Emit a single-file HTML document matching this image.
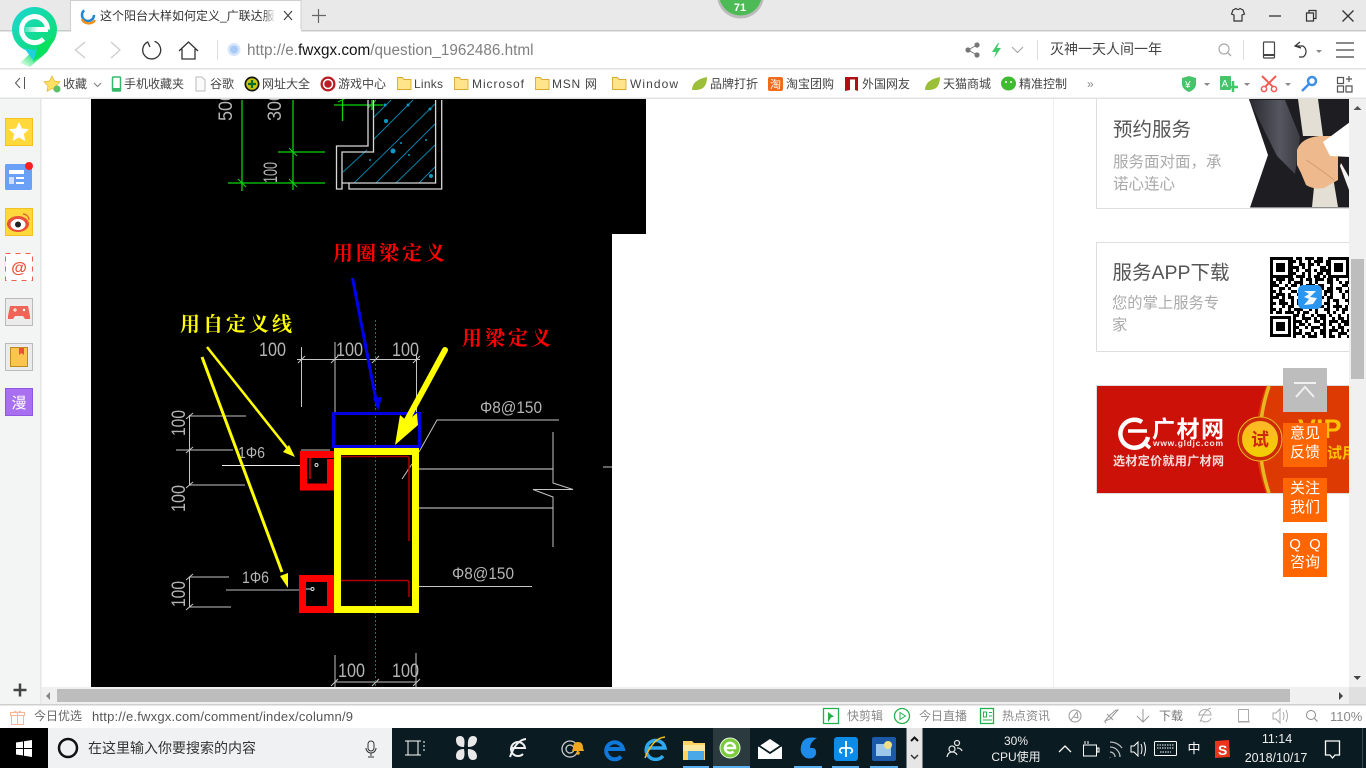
<!DOCTYPE html>
<html lang="zh"><head><meta charset="utf-8"><title>这个阳台大样如何定义_广联达服务</title>
<style>
html,body{margin:0;padding:0;background:#fff;overflow:hidden;width:1366px;height:768px}
svg{display:block;font-family:"Liberation Sans","Noto Sans CJK SC",sans-serif}
.b text{font-size:12px;fill:#444}
.cad text{font-family:"Liberation Sans",sans-serif;fill:#b4b4b4}
.s{fill:none;stroke:#555;stroke-width:1.2}
.g{stroke:#c4c4c4;stroke-width:1;fill:none}
.w{fill:none;stroke:#fff;stroke-width:1.3}
</style></head><body>
<svg width="1366" height="768" viewBox="0 0 1366 768" xmlns="http://www.w3.org/2000/svg">
<defs>
<linearGradient id="lg" x1="0" y1="0" x2="1" y2="1"><stop offset="0" stop-color="#1fd6d8"/><stop offset="1" stop-color="#08e060"/></linearGradient>
<linearGradient id="tl" x1="1" y1="0" x2="0" y2="1"><stop offset="0" stop-color="#08e060"/><stop offset=".55" stop-color="#08e060"/><stop offset="1" stop-color="#08e060" stop-opacity="0"/></linearGradient>
<linearGradient id="tf" x1="0" x2="1"><stop offset="0" stop-color="#fff" stop-opacity="0"/><stop offset="1" stop-color="#fff"/></linearGradient>
<linearGradient id="bar" x1="0" x2="1"><stop offset="0" stop-color="#fff" stop-opacity=".15"/><stop offset=".6" stop-color="#fff"/></linearGradient>
<linearGradient id="sleeve" x1="0" x2="1"><stop offset="0" stop-color="#2a2a30"/><stop offset=".6" stop-color="#55565f"/><stop offset="1" stop-color="#3b3b42"/></linearGradient>
<linearGradient id="coin" x1="0" y1="0" x2="0" y2="1"><stop offset="0" stop-color="#ffb52a"/><stop offset="1" stop-color="#f0d000"/></linearGradient>
<clipPath id="topclip"><rect x="91" y="99" width="555" height="135"/></clipPath>
<clipPath id="cadclip"><rect x="91" y="234" width="521" height="453"/></clipPath>
</defs>

<!-- title bar -->
<rect width="1366" height="30" fill="#e9e9e9"/>
<rect y="30" width="1366" height="38" fill="#fff"/>
<rect y="30" width="1366" height="1.5" fill="#c9c9c9"/>
<rect y="68" width="1366" height="1.5" fill="#e2e2e2"/>
<rect y="69.5" width="1366" height="29" fill="#fff"/>
<rect y="97.5" width="1366" height="1.5" fill="#e2e2e2"/>
<!-- tab -->
<path d="M70.5 31.5V.5H301V31.5" fill="#fff" stroke="#cfcfcf"/>
<rect x="71" y="29" width="230" height="4" fill="#fff"/>
<circle cx="88" cy="15" r="6" fill="none" stroke="#1c88d8" stroke-width="2.5" stroke-dasharray="24 14"/>
<path d="M82 19a7 6 0 0 0 13 1" fill="none" stroke="#f09020" stroke-width="2.5"/>
<text x="100" y="20" font-size="12" fill="#333">这个阳台大样如何定义_广联达服</text>
<rect x="262" y="6" width="14" height="18" fill="url(#tf)"/>
<path d="M284 11l8 9m0-9l-8 9" stroke="#444" stroke-width="1.2"/>
<path d="M318.500 9v14M312 15.500h14" stroke="#666" stroke-width="1.200"/>
<!-- green badge -->
<circle cx="740.500" cy="-5" r="23.500" fill="#bbb"/>
<circle cx="740.500" cy="-6" r="21.500" fill="#4dbb55"/>
<text x="740" y="11" font-size="11" font-weight="700" fill="#fff" text-anchor="middle">71</text>
<!-- window controls -->
<path d="M1233 10l3-1.500q2 2 4 0l3 1.500 1.500 4-2.500 1v6h-8v-6l-2.500-1z" class="s" style="stroke:#333"/>
<path d="M1269 16h12" stroke="#333" stroke-width="1.300"/>
<path d="M1306.500 13h7v8h-7zM1309 13v-2.500h7v8h-2.500" class="s" style="stroke:#333"/>
<path d="M1342.500 10.500l11 11m0-11l-11 11" stroke="#333" stroke-width="1.300"/>

<!-- logo -->
<path d="M56 36L47 52 30 67 20 63 38 46z" fill="url(#tl)"/>
<circle cx="34.500" cy="29.500" r="22.500" fill="url(#lg)"/>
<path d="M24 48l9 2 13-1-13 11z" fill="#1fd0e0"/>
<path d="M56 36L47 50 33 62 38 46z" fill="#08e060"/>
<path d="M47.500 29.500A13 13 0 1 0 43.500 39" fill="none" stroke="#fff" stroke-width="5"/>
<rect x="24" y="27" width="24" height="5" fill="url(#bar)"/>

<!-- nav -->
<path d="M85 42L75.500 50 85 58" fill="none" stroke="#ccc" stroke-width="1.300"/>
<path d="M111 42l9 8-9 8" fill="none" stroke="#ccc" stroke-width="1.300"/>
<path d="M147.500 42a9 9 0 1 0 7-.6M147.500 41.500L150 47" fill="none" stroke="#333" stroke-width="1.300"/>
<path d="M179 51l9.500-9 9.500 9M182 49v10h13V49" fill="none" stroke="#333" stroke-width="1.300"/>
<rect x="217" y="40" width="1" height="20" fill="#ddd"/>
<circle cx="234" cy="49.500" r="6.500" fill="#d5e5fa"/><circle cx="234" cy="49.500" r="4" fill="#a8c8f5"/>
<text x="247" y="55" font-size="15.300" fill="#808080">http://e.<tspan fill="#111">fwxgx.com</tspan>/question_1962486.html</text>
<g fill="#777"><circle cx="968" cy="50" r="2.600"/><circle cx="977" cy="45" r="2.600"/><circle cx="977" cy="55" r="2.600"/></g>
<path d="M968 50l9-5m-9 5l9 5" stroke="#777"/>
<path d="M998 43l-6 9h4l-2 6 7-10h-4l2-5z" fill="#3ecb6a"/>
<path d="M1012 47l5.500 5.500 5.500-5.500" class="s" style="stroke:#aaa"/>
<rect x="1037" y="40" width="1" height="20" fill="#ddd"/>
<text x="1050" y="54" font-size="14" fill="#444">灭神一天人间一年</text>
<circle cx="1224" cy="49" r="5" class="s" style="stroke:#aaa"/><path d="M1228 53l3 3" stroke="#aaa" stroke-width="1.300"/>
<rect x="1243" y="40" width="1" height="20" fill="#ddd"/>
<rect x="1263.500" y="42" width="11" height="16" rx="1" class="s" style="stroke:#444"/><path d="M1264 55h10" stroke="#444" stroke-width="2"/>
<path d="M1300 42l-5 4 6 2M1296 46h7a6.500 6.500 0 0 1 0 11h-4" class="s" style="stroke:#333"/>
<path d="M1316 50h6l-3 3z" fill="#888"/>
<path d="M1336 43h18M1336 50h18M1336 57h18" stroke="#444" stroke-width="1.300"/>

<!-- bookmarks -->
<g class="b">
<path d="M20 78l-4.500 5 4.500 5M24.500 77v12" fill="none" stroke="#555"/>
<path d="M52 76l2.500 5 5.500.8-4 4 1 5.500-5-2.700-5 2.700 1-5.500-4-4 5.500-.8z" fill="#ffe066" stroke="#e0b030" stroke-width=".7"/><circle cx="57" cy="89" r="3.500" fill="#5ac06a"/>
<text x="63" y="88">收藏</text>
<path d="M94 83l3.500 3.500L101 83" class="s" style="stroke:#888"/>
<rect x="112.500" y="77" width="8" height="14" rx="1" fill="#fff" stroke="#35b868" stroke-width="1.500"/><rect x="113" y="88" width="7" height="3" fill="#35b868"/>
<text x="124" y="88">手机收藏夹</text>
<path d="M196 77h6l3 3v11h-9z" fill="#fbfbfb" stroke="#bbb"/>
<text x="210" y="88">谷歌</text>
<circle cx="252" cy="84" r="7.500" fill="#111"/><circle cx="252" cy="84" r="5.800" fill="#c8c810"/><path d="M252 80v8M248 84h8" stroke="#0b6b2b" stroke-width="2.200"/>
<text x="262" y="88">网址大全</text>
<circle cx="328" cy="84" r="7.500" fill="#b81c24"/><circle cx="328" cy="84" r="4.500" fill="none" stroke="#fff" stroke-width="1.500"/>
<text x="338" y="88">游戏中心</text>
<g fill="#ffe48a" stroke="#d9a930" stroke-width=".9">
<path d="M397.500 89.500v-12h5l1.500 2h7v10z"/><path d="M454.500 89.500v-12h5l1.500 2h7v10z"/><path d="M535.500 89.500v-12h5l1.500 2h7v10z"/><path d="M612.500 89.500v-12h5l1.500 2h7v10z"/>
</g>
<text x="414" y="88" textLength="29">Links</text>
<text x="472" y="88" textLength="52">Microsof</text>
<text x="552" y="88" textLength="45">MSN 网</text>
<text x="630" y="88" textLength="48">Window</text>
<path d="M692 90q0-10 15-13 0 13-11 13z" fill="#9cbf3a"/><text x="710" y="88">品牌打折</text>
<rect x="768" y="77" width="15" height="14" rx="2" fill="#f26a1b"/><text x="770" y="88" font-size="11" style="fill:#fff;font-size:11px">淘</text><text x="786" y="88">淘宝团购</text>
<path d="M845 77h13v14l-3-1V79.500h-5V90l-5 1z" fill="#b01018"/><text x="862" y="88">外国网友</text>
<path d="M925 90q0-10 15-13 0 13-11 13z" fill="#9cbf3a"/><text x="943" y="88">天猫商城</text>
<ellipse cx="1008.500" cy="83.500" rx="7.500" ry="7" fill="#3fbb30"/><circle cx="1006" cy="82" r="1" fill="#fff"/><circle cx="1011" cy="82" r="1" fill="#fff"/><text x="1019" y="88">精准控制</text>
<text x="1087" y="88" style="fill:#888">»</text>
<path d="M1189 76l7 2v6q0 5-7 8-7-3-7-8v-6z" fill="#45c56a"/><text x="1185" y="88" style="fill:#fff;font-size:10px">¥</text>
<path d="M1204 83h6l-3 3z" fill="#888"/>
<rect x="1220" y="76" width="11" height="14" rx="1" fill="#45c56a"/><text x="1221.500" y="87" style="fill:#fff;font-size:10px">A</text><path d="M1233 81v11M1228 87h10" stroke="#45c56a" stroke-width="2.500"/>
<path d="M1244 83h6l-3 3z" fill="#888"/>
<path d="M1262 76l11 11M1276 76l-11 11" stroke="#f25a50" stroke-width="2"/><circle cx="1264" cy="89" r="2.600" class="w" style="stroke:#f25a50;stroke-width:1.500"/><circle cx="1274" cy="89" r="2.600" class="w" style="stroke:#f25a50;stroke-width:1.500"/>
<path d="M1285 83h6l-3 3z" fill="#888"/>
<circle cx="1312" cy="81" r="4" fill="none" stroke="#3f8fe8" stroke-width="2.500"/><path d="M1309 84l-7 7" stroke="#3f8fe8" stroke-width="2.500"/>
<path d="M1337.500 77.500h6v6h-6zM1337.500 86h6v6h-6zM1346 86h6v6h-6zM1349 76v6M1346 79h6" class="s" style="stroke:#555"/>
</g>

<!-- left sidebar -->
<rect y="99" width="40" height="606" fill="#f3f5f4"/>
<rect x="40" y="99" width="1.500" height="606" fill="#e6e6e6"/>
<rect x="5.500" y="118.500" width="27" height="27" fill="#ffd93b" stroke="#f5c022"/>
<path d="M19 122l3 6.500 7 .8-5.200 4.700 1.500 7-6.300-3.600-6.300 3.600 1.500-7-5.200-4.700 7-.8z" fill="#fff"/>
<rect x="5" y="164" width="27" height="26" rx="1.500" fill="#6aa0f5"/><rect x="9" y="170" width="15" height="4" fill="#fff"/><rect x="9" y="177" width="5" height="7" fill="#cfe0fb"/><path d="M16 178h8M16 183h8" stroke="#fff" stroke-width="2"/><circle cx="29" cy="166" r="4" fill="#fa2020"/>
<rect x="5.500" y="208.500" width="27" height="27" fill="#ffd93b" stroke="#f5c022"/>
<ellipse cx="18" cy="224" rx="11" ry="8" fill="#e8503a"/><ellipse cx="18" cy="224.500" rx="7.500" ry="5.500" fill="#fff"/><circle cx="18" cy="224.500" r="3" fill="#222"/><path d="M23 214a6 6 0 0 1 6 6" class="s" style="stroke:#e8503a"/>
<rect x="5.500" y="253.500" width="27" height="27" fill="#fff" stroke="#f0604a" stroke-dasharray="5 5"/>
<text x="19" y="273" font-size="16" fill="#e8503a" text-anchor="middle" font-weight="700">@</text>
<rect x="5.500" y="298.500" width="27" height="27" fill="#ebebeb" stroke="#bbb"/>
<path d="M10 306h18l2 10v3h-5l-2-3h-8l-2 3H8v-3z" fill="#ef6457"/><path d="M13 310h4M15 308v4" stroke="#fff"/><circle cx="24" cy="310" r="1.200" fill="#fff"/>
<rect x="5.500" y="343.500" width="27" height="27" fill="#ebebeb" stroke="#bbb"/>
<rect x="10.500" y="347.500" width="17" height="19" fill="#fbc54e" stroke="#c08a20"/><path d="M19 348h5v7l-2.500-2-2.500 2z" fill="#e8503a"/>
<rect x="5.500" y="388.500" width="27" height="27" fill="#a870f0" stroke="#9058e0"/>
<text x="19" y="408" font-size="15" fill="#fff" text-anchor="middle">漫</text>
<path d="M20 683.500v13M13.500 690h13" stroke="#444" stroke-width="2.500"/>

<!-- content divider -->
<rect x="1053" y="99" width="1" height="588" fill="#eee"/>

<!-- CAD image -->
<path d="M91 99H646V234H612V687H91z" fill="#000"/>
<g clip-path="url(#topclip)">
<path d="M242 100v91M293 100v90M228 183h97M278 152h47M334 105h49M342.500 100v21M372 100v10" stroke="#0ad40a" stroke-width="1.300" fill="none"/>
<path d="M238 179l8 8M289 148l8 8M289 179l8 8M338 102l8-4M368 108l8-8" stroke="#0ad40a" fill="none"/>
<g stroke="#0e7fa6" fill="none" stroke-width="1">
<path d="M343 172l24-22M354 183l81-79M376 183l59-59M396 183l39-38M419 183l16-16M373 140l40-40M373 118l18-18"/>
</g>
<g fill="#0e9ac4"><circle cx="386" cy="121" r="2"/><circle cx="393" cy="151" r="2.500"/><circle cx="431" cy="176" r="2"/><circle cx="385" cy="105" r="1.500"/><circle cx="408" cy="105" r="1.500"/><circle cx="430" cy="109" r="1.500"/><circle cx="401" cy="143" r="1"/><circle cx="409" cy="155" r="1"/><circle cx="426" cy="140" r="1"/><circle cx="370" cy="160" r="1"/></g>
<path d="M368 100V146H336.500V189H342V152H373.500V100M342 183H435.600V100M349 183V189H441.700V100" fill="none" stroke="#d8d8d8" stroke-width="1.300"/>
<g class="cad" font-size="19">
<text transform="translate(232 121) rotate(-90)" textLength="30" lengthAdjust="spacingAndGlyphs">500</text>
<text transform="translate(281 121) rotate(-90)" textLength="30" lengthAdjust="spacingAndGlyphs">300</text>
<text transform="translate(277 183) rotate(-90)" textLength="21" lengthAdjust="spacingAndGlyphs">100</text>
</g>
</g>

<g class="g" clip-path="url(#cadclip)">
<path d="M301.500 347v60M335 342v70M416.500 353v59M297 359.500h123M298 363l7-7M331 363l7-7M372 363l7-7M413 363l7-7"/>
<path d="M189.500 415v70M189 416h57M176 450h57M189 485h56M186 419l7-6M186 453l7-6M186 488l7-6"/>
<path d="M222 465.500h78" stroke="#eee"/>
<path d="M301 450h29"/>
<path d="M419 452l18-32h122"/>
<path d="M418 469h135M418 508h135" stroke="#ddd"/>
<path d="M553 432V483L573 489.500H533L553 497V547"/>
<path d="M603 467h9"/>
<path d="M402 479l10-15"/>
<path d="M189.500 577v30M189 577h40M189 607h42M186 580l7-6M186 610l7-6"/>
<path d="M226 590h74" stroke="#bbb"/>
<path d="M419 586.500h113"/>
<path d="M335 655v35M416 653v34M331 686l7-7M372 686l7-7M413 686l7-7M335 682h81"/>
</g>
<path d="M375.500 320V687" stroke="#0b8a20" stroke-dasharray="2 2" fill="none"/>
<g class="cad" font-size="19">
<text x="259" y="356" textLength="27" lengthAdjust="spacingAndGlyphs">100</text>
<text x="336" y="356" textLength="27" lengthAdjust="spacingAndGlyphs">100</text>
<text x="392" y="356" textLength="27" lengthAdjust="spacingAndGlyphs">100</text>
<text transform="translate(185 436) rotate(-90)" textLength="26" lengthAdjust="spacingAndGlyphs">100</text>
<text transform="translate(185 512) rotate(-90)" textLength="27" lengthAdjust="spacingAndGlyphs">100</text>
<text transform="translate(185 607) rotate(-90)" textLength="26" lengthAdjust="spacingAndGlyphs">100</text>
<text x="238" y="458" font-size="16" textLength="27" lengthAdjust="spacingAndGlyphs">1Φ6</text>
<text x="242" y="583" font-size="17" textLength="27" lengthAdjust="spacingAndGlyphs">1Φ6</text>
<text x="480" y="413" font-size="17" textLength="62" lengthAdjust="spacingAndGlyphs">Φ8@150</text>
<text x="452" y="579" font-size="17" textLength="62" lengthAdjust="spacingAndGlyphs">Φ8@150</text>
<text x="338" y="677" textLength="27" lengthAdjust="spacingAndGlyphs">100</text>
<text x="392" y="677" textLength="27" lengthAdjust="spacingAndGlyphs">100</text>
</g>
<!-- red rebar -->
<path d="M341 456.500h66q2 0 2 2V541" fill="none" stroke="#b00000" stroke-width="1.500"/>
<path d="M341 580.500h66q2 0 2 2V597" fill="none" stroke="#b00000" stroke-width="1.500"/>
<path d="M310 457v22" stroke="#c00" stroke-width="1.500"/>
<circle cx="316.500" cy="465" r="1.500" fill="none" stroke="#ddd"/>
<circle cx="312.500" cy="589" r="1.500" fill="none" stroke="#ddd"/><path d="M305 589h6" stroke="#ddd"/>
<!-- coloured frames -->
<rect x="333.500" y="413.500" width="86" height="33" fill="none" stroke="#0000e0" stroke-width="3"/>
<rect x="337.500" y="451.500" width="78" height="158" fill="none" stroke="#ffff00" stroke-width="7"/>
<path d="M334 454.500H303.500V487H334" fill="none" stroke="#f00" stroke-width="7"/>
<path d="M334 578.500H302.500V609.500H334" fill="none" stroke="#f00" stroke-width="7"/>
<rect x="327" y="459" width="7" height="25" fill="#f00"/>
<rect x="327" y="582" width="7" height="31" fill="#f00"/>
<!-- arrows -->
<path d="M352.500 278L376 400" stroke="#0000f0" stroke-width="3" fill="none"/>
<path d="M378 411l-5-13 9-1z" fill="#0000f0"/>
<path d="M207 347L288 449" stroke="#ff0" stroke-width="2.500"/><path d="M295 457l-12-5 6-7z" fill="#ff0"/>
<path d="M202 357L282 572" stroke="#ff0" stroke-width="3"/><path d="M288 588l-8-12 8-3z" fill="#ff0"/>
<path d="M445 350L407 420" stroke="#ff0" stroke-width="6" stroke-linecap="round"/>
<path d="M395 445L400 415 407 421 417 413 418 425z" fill="#ff0"/>
<!-- labels -->
<g font-size="20" font-weight="700">
<text x="333" y="260" fill="#f00" letter-spacing="3" style="font-family:'Liberation Serif','Noto Serif CJK SC',serif">用圈梁定义</text>
<text x="180" y="331" fill="#ff0" letter-spacing="3" style="font-family:'Liberation Serif','Noto Serif CJK SC',serif">用自定义线</text>
<text x="462" y="345" fill="#f00" letter-spacing="3" style="font-family:'Liberation Serif','Noto Serif CJK SC',serif">用梁定义</text>
</g>

<!-- right cards -->
<path d="M1096.500 99V208.500H1349" fill="none" stroke="#ddd"/>
<text x="1113" y="136" font-size="19.500" fill="#555">预约服务</text>
<text x="1113" y="167" font-size="15.500" fill="#aaa">服务面对面，承</text>
<text x="1113" y="189" font-size="15.500" fill="#aaa">诺心连心</text>
<!-- handshake photo -->
<path d="M1249 99H1349V207.500H1250L1268 155z" fill="#1d1d22"/>
<path d="M1249 100L1285 100 1300 137 1295 174 1277 156z" fill="url(#sleeve)"/>
<path d="M1298 99h20l5 37h-20z" fill="#e4dfd5"/>
<path d="M1315 177h18l5 30h-26z" fill="#e4dfd5"/>
<path d="M1297 150q4-12 22-14l14 0 5 8 0 36-14 8q-10 2-18-3l-5-12-4-8z" fill="#eeb98c"/>
<path d="M1306 160q10 6 28 20" stroke="#d59a6e" fill="none"/>
<path d="M1323 142l27-20v35l-20-1z" fill="#fff"/>
<path d="M1341 163l8 14v13l-9-24z" fill="#f2f2f2"/>

<path d="M1349 242.500H1096.500V351.500H1349" fill="none" stroke="#ddd"/>
<text x="1112.500" y="279" font-size="19.500" fill="#555" textLength="117">服务APP下载</text>
<text x="1112" y="308" font-size="15.300" fill="#aaa">您的掌上服务专</text>
<text x="1112" y="330" font-size="15.300" fill="#aaa">家</text>
<!-- QR -->
<g stroke="#000" stroke-width="3" fill="none">
<path d="M1290 258.500H1329" stroke-dasharray="3 3 6 3 9 3 6 6 3 3 6"/>
<path d="M1290 261.500H1329" stroke-dasharray="6 3 3 6 3 3 9 3 3 9"/>
<path d="M1290 264.500H1329" stroke-dasharray="3 6 6 3 6 3 3 6 9 3"/>
<path d="M1290 267.500H1329" stroke-dasharray="9 3 3 3 3 9 6 3 3 3"/>
<path d="M1290 270.500H1329" stroke-dasharray="3 3 3 6 6 3 3 3 9 3"/>
<path d="M1290 273.500H1329" stroke-dasharray="6 6 3 3 3 6 6 3 3 3"/>
<path d="M1290 276.500H1329" stroke-dasharray="3 3 9 3 3 3 6 3 3"/>
<path d="M1270 279.500H1349" stroke-dasharray="3 3 9 3 6 6 3 3 6 3 9 3 6"/>
<path d="M1270 282.500H1349" stroke-dasharray="6 3 3 6 3 3 9 6 3 3 3 9 6"/>
<path d="M1270 285.500H1349" stroke-dasharray="9 6 3 3 6 3 3 3 9 3 6 6 3"/>
<path d="M1270 288.500H1349" stroke-dasharray="3 6 6 3 3 9 3 6 3 3 9 3 6"/>
<path d="M1270 291.500H1349" stroke-dasharray="6 3 3 9 6 3 6 3 3 6 3 3 9"/>
<path d="M1270 294.500H1349" stroke-dasharray="3 3 9 3 3 6 3 3 9 3 6 3 3"/>
<path d="M1270 297.500H1349" stroke-dasharray="9 3 3 3 6 6 9 3 3 6 3 3 6"/>
<path d="M1270 300.500H1349" stroke-dasharray="3 6 6 6 3 3 3 9 6 3 3 6 3"/>
<path d="M1270 303.500H1349" stroke-dasharray="6 3 9 3 3 3 6 3 3 9 3 3 6"/>
<path d="M1270 306.500H1349" stroke-dasharray="3 9 3 3 6 6 3 3 6 3 9 3 3"/>
<path d="M1270 309.500H1349" stroke-dasharray="6 3 3 6 3 3 9 6 3 3 3 6 6"/>
<path d="M1270 312.500H1349" stroke-dasharray="3 3 6 3 9 3 3 3 6 6 3 9 3"/>
<path d="M1293 315.500H1349" stroke-dasharray="6 3 3 6 3 3 9 3 3 6 3"/>
<path d="M1293 318.500H1349" stroke-dasharray="3 6 9 3 3 3 6 6 3 3 6"/>
<path d="M1293 321.500H1349" stroke-dasharray="9 3 3 6 6 3 3 3 9 3"/>
<path d="M1293 324.500H1349" stroke-dasharray="3 3 6 3 3 9 6 3 3 6"/>
<path d="M1293 327.500H1349" stroke-dasharray="6 6 3 3 9 3 3 6 3 3"/>
<path d="M1293 330.500H1349" stroke-dasharray="3 3 3 9 3 6 6 3 9 3"/>
<path d="M1293 333.500H1349" stroke-dasharray="9 3 6 3 3 3 6 3 3 6"/>
<path d="M1293 336.500H1349" stroke-dasharray="3 6 3 3 9 6 3 3 6 3"/>
<rect x="1271.500" y="258.500" width="18" height="18"/><rect x="1329.500" y="258.500" width="18" height="18"/><rect x="1271.500" y="317.500" width="18" height="18"/>
</g>
<path d="M1276 263h9v9h-9zM1334 263h9v9h-9zM1276 322h9v9h-9z" fill="#000"/>
<rect x="1298" y="285" width="24" height="24" rx="5" fill="#2a96f0"/>
<path d="M1304 291h12l-6 6 7 1-4 6-9 1 5-6-5-2 5-3z" fill="#eef6ff"/>

<!-- banner -->
<rect x="1096.500" y="385.500" width="253" height="108" fill="#cc1208" stroke="#ddd"/>
<path d="M1266 386h83v107h-83q-20-53 0-107z" fill="#dc3a02"/>
<path d="M1269 386q-18 53 0 107" fill="none" stroke="#e8b820" stroke-width="3.500"/>
<circle cx="1260" cy="439" r="22" fill="#cc2a08" stroke="#e8b820"/>
<circle cx="1260" cy="439" r="18.500" fill="url(#coin)" stroke="#cc2a08"/>
<text x="1251" y="446" font-size="18" font-weight="700" fill="#cc2a08">试</text>
<path d="M1142 422a14 14 0 1 0 6 15" fill="none" stroke="#fff" stroke-width="4.500"/><path d="M1128 431h19" stroke="#fff" stroke-width="3.500"/><path d="M1143 442l7 6" stroke="#fff" stroke-width="3.500"/>
<text x="1152" y="437" font-size="23" font-weight="700" fill="#fff" textLength="72">广材网</text>
<text x="1153" y="446" font-size="8.500" font-weight="700" fill="#f8e8e8" textLength="70">www.gldjc.com</text>
<text x="1113" y="465" font-size="12" font-weight="700" fill="#f5dcdc" textLength="111">选材定价就用广材网</text>
<text x="1298" y="438" font-size="27" font-weight="700" fill="#ffc000">VIP</text>
<text x="1327" y="458" font-size="15" font-weight="700" fill="#ffc000">试用</text>

<!-- float buttons -->
<rect x="1283" y="368" width="44" height="44" fill="#bdbdbd"/>
<path d="M1294 383h22M1296 397l9-10 9 10" fill="none" stroke="#f0f0f0" stroke-width="2"/>
<g fill="#fff" font-size="15" text-anchor="middle">
<rect x="1283" y="423" width="44" height="44" fill="#ff6600"/>
<text x="1305" y="438">意见</text><text x="1305" y="457">反馈</text>
<rect x="1283" y="478" width="44" height="44" fill="#ff6600"/>
<text x="1305" y="493">关注</text><text x="1305" y="512">我们</text>
<rect x="1283" y="533" width="44" height="44" fill="#ff6600"/>
<text x="1305" y="549" word-spacing="4">Q Q</text><text x="1305" y="567">咨询</text>
</g>

<!-- vertical scrollbar -->
<rect x="1349" y="99" width="17" height="588" fill="#f0f0f0"/>
<rect x="1351" y="259" width="13" height="120" fill="#bdbdbd"/>
<path d="M1353.500 110l4-4 4 4z" fill="#555"/>
<path d="M1353.500 676h7.500l-3.700 4z" fill="#444"/>

<!-- horizontal scrollbar -->
<rect x="41.500" y="687" width="1324.500" height="17" fill="#f0f0f0"/>
<rect x="57" y="689" width="1233" height="13" fill="#bdbdbd"/>
<path d="M50 692l-4 4 4 4z" fill="#888"/>
<path d="M1339 692l4 4-4 4z" fill="#444"/>
<rect x="1349" y="687" width="17" height="17" fill="#e0e0e0"/>
<rect y="704" width="1366" height="1.500" fill="#cfcfcf"/>

<!-- status bar -->
<rect y="705.500" width="1366" height="22.500" fill="#fff"/>
<g fill="#666" font-size="12">
<path d="M10.500 712.500h14v3h-14zM11.500 715.500h12v9h-12zM17.500 712v12.500M14 711l3.500 1.500L21 711" fill="none" stroke="#f8b898"/>
<text x="34" y="720">今日优选</text>
<text x="92" y="721" font-size="13" fill="#555" textLength="261">http://e.fwxgx.com/comment/index/column/9</text>
<rect x="823.500" y="708.500" width="15" height="15" fill="none" stroke="#22b14c" stroke-width="1.300"/><path d="M828 712l6 4.500-3 1-3 5z" fill="#22b14c"/>
<text x="847" y="720" fill="#888">快剪辑</text>
<circle cx="902" cy="716" r="7.500" fill="none" stroke="#22b14c" stroke-width="1.300"/><path d="M900 712.500l5.500 3.500-5.500 3.500z" fill="none" stroke="#22b14c"/>
<text x="919" y="720" fill="#888">今日直播</text>
<rect x="980.500" y="708.500" width="13" height="15" fill="none" stroke="#22b14c" stroke-width="1.300"/><path d="M983.500 712v5h3v-5zM989 712.500h3M989 716h3M983 720h9" fill="none" stroke="#22b14c"/>
<text x="1002" y="720" fill="#888">热点资讯</text>
<circle cx="1075" cy="716" r="6" fill="none" stroke="#999"/><path d="M1071 720l6-8 1 6-4-1" fill="none" stroke="#999"/>
<path d="M1105 721l5-2 6-7 2-2-2 0-7 6zM1107 714l6 6M1106 722l-1 1" fill="none" stroke="#999"/>
<path d="M1143 709v13M1137 716l6 6 6-6" fill="none" stroke="#999"/>
<text x="1159" y="720" fill="#777">下载</text>
<path d="M1199 716a6 6 0 0 1 12-1h-12m12 3a6 6 0 0 1-10 2m10-12q-6 1-11 14" fill="none" stroke="#aaa"/>
<path d="M1238.500 721.500v-12h10v12zM1238 722h12" fill="none" stroke="#aaa"/>
<path d="M1273 713h3l4-4v14l-4-4h-3zM1283 712q2 4 0 8M1286 710q3 6 0 12" fill="none" stroke="#aaa"/>
<circle cx="1311" cy="715" r="4.500" fill="none" stroke="#888"/><path d="M1314.500 718.500l3 3" stroke="#888"/>
<text x="1330" y="721" font-size="13" fill="#888">110%</text>
</g>

<!-- taskbar -->
<rect y="728" width="1366" height="40" fill="#0a1b21"/>
<rect width="48" y="728" height="40" fill="#000"/>
<path d="M16 742.500l7-1v6.500h-7zM24 741.300l8-1.300v8h-8zM16 749h7v6.500l-7-1zM24 749h8v8l-8-1.300z" fill="#fff"/>
<rect x="48" y="728" width="344" height="40" fill="#f0f1f3"/>
<circle cx="68" cy="748" r="9" fill="none" stroke="#111" stroke-width="2.500"/>
<text x="88" y="753" font-size="14" fill="#333">在这里输入你要搜索的内容</text>
<rect x="368" y="741" width="6" height="10" rx="3" fill="none" stroke="#333"/><path d="M366 748a5 5 0 0 0 10 0M371 753v3M368 757h6" fill="none" stroke="#333"/>
<path d="M408 741h10v14h-10zM405 741h16M405 755h16M424 741v2m0 2v2m0 2v2" class="w" style="stroke-width:1" />
<g fill="#e8e8e8"><path d="M464 747q-8 0-8-7 0-4 4-4 6 0 4 11zM468 747q8 0 9-7 0-4-4-4-6 0-5 11zM464 749q-8 0-8 7 0 4 4 4 6 0 4-11zM468 749q8 0 9 7 0 4-4 4-6 0-5-11z"/></g>
<path d="M511 748h14a7 7 0 1 0-2 6M511 748a7 7 0 0 1 0 0M526 739q-10 1-16 18" fill="none" stroke="#f0f0f0" stroke-width="2"/>
<circle cx="570" cy="749" r="8" class="w" style="stroke:#ccc"/><circle cx="570" cy="749" r="4" class="w" style="stroke:#ccc"/>
<path d="M573 748q0-6 5-6t5 6l1 3h-12z" fill="#f0a820"/><circle cx="578" cy="753" r="1.800" fill="#f0a820"/>
<path d="M606 749h17a8.500 8.500 0 1 0-2 7.500" fill="none" stroke="#0f78d8" stroke-width="4"/>
<path d="M646 748h19a9.500 9.500 0 1 0-2 8" fill="none" stroke="#30a8f0" stroke-width="3.500"/><path d="M665 737q-12 1-20 21" fill="none" stroke="#f0c020" stroke-width="1.500"/>
<path d="M683 741h9l2 2h11v17h-22z" fill="#ffd35f"/><path d="M688 749h16v11h-16z" fill="#4aa8e8"/><rect x="683" y="745" width="22" height="6" fill="#f8e8a0"/>
<rect x="713" y="728" width="37" height="40" fill="#2b3a3f"/>
<circle cx="730" cy="748" r="10" fill="#7bcc3a"/><circle cx="730" cy="748" r="10" fill="none" stroke="#e8f8e0"/>
<path d="M725 748h10a5 5 0 1 0-1.500 3.500" fill="none" stroke="#fff" stroke-width="2.500"/>
<path d="M758 747l12-8 12 8v12h-24z" fill="#fff"/><path d="M758 745l12 8 12-8" fill="none" stroke="#0a1b21" stroke-width="1.800"/>
<path d="M817 738q-12-2-15 5-4 10 4 15 8 2 10-4 1-7-6-6 0-6 7-10z" fill="#1f8be8"/>
<rect x="834" y="737" width="24" height="24" rx="3" fill="#0b8ce8"/><path d="M846 741v16M841 748h10M841 748q-3 4 1 5M851 748q3 4-1 5" fill="none" stroke="#fff" stroke-width="1.800"/>
<rect x="872" y="737" width="24" height="24" rx="2" fill="#1a5aa8"/><rect x="876" y="744" width="15" height="12" fill="#9cc8ec"/><circle cx="888" cy="745" r="4" fill="#f0e080"/>
<g fill="#5ab0f0"><rect x="683" y="766" width="26" height="2"/><rect x="713" y="766" width="37" height="2"/><rect x="794" y="766" width="28" height="2"/><rect x="832" y="766" width="27" height="2"/><rect x="870" y="766" width="28" height="2"/></g>
<rect x="906.500" y="728" width="16" height="40" fill="#e6e6e6"/>
<path d="M911 741l3.500-3.500L918 741" fill="none" stroke="#111" stroke-width="2"/>
<path d="M911 755l3.500 3.500L918 755" fill="none" stroke="#333" stroke-width="1.500"/>
<circle cx="957" cy="743" r="2.500" class="w" style="stroke:#ddd"/><circle cx="952" cy="749" r="3" class="w" style="stroke:#ddd"/><path d="M947 757q1-5 5-5t5 3M957 748q4 0 5 3" class="w" style="stroke:#ddd"/>
<g fill="#eee" text-anchor="middle">
<text x="1016" y="745" font-size="12">30%</text>
<text x="1016" y="761" font-size="12">CPU使用</text>
<text x="1194" y="753" font-size="13" fill="#fff">中</text>
<text x="1277" y="743" font-size="12.500">11:14</text>
<text x="1276" y="762" font-size="12.500">2018/10/17</text>
</g>
<path d="M1059 752l6-6 6 6" class="w"/>
<path d="M1083.500 745h13v11h-13zM1097 748h2v4h-2zM1085 744v-3m3 3v-3" class="w" style="stroke-width:1"/>
<path d="M1110 757v.5M1110 752a5 5 0 0 1 5 5M1110 747a10 10 0 0 1 10 10M1110 742a15 15 0 0 1 12 6" class="w" style="stroke:#bbb"/>
<path d="M1131 746h3l4-4v14l-4-4h-3zM1141 744q2 5 0 10M1144 742q3 7 0 14" class="w" style="stroke-width:1"/>
<rect x="1154.500" y="741.500" width="22" height="14" rx="1" class="w" style="stroke-width:1"/>
<path d="M1157 745h17M1157 748h17M1160 752h11" stroke="#fff" stroke-dasharray="1.500 1" fill="none"/>
<path d="M1215 741l14-1 1 17-15 1z" fill="#e8351c"/>
<text x="1218" y="755" font-size="14" font-weight="700" fill="#fff">S</text>
<path d="M1325.500 741h14v14h-4.500l-2.500 3-2.500-3h-4.500z" class="w"/>
<rect x="1362" y="728" width="1" height="40" fill="#3a4a50"/>
</svg>
</body></html>
